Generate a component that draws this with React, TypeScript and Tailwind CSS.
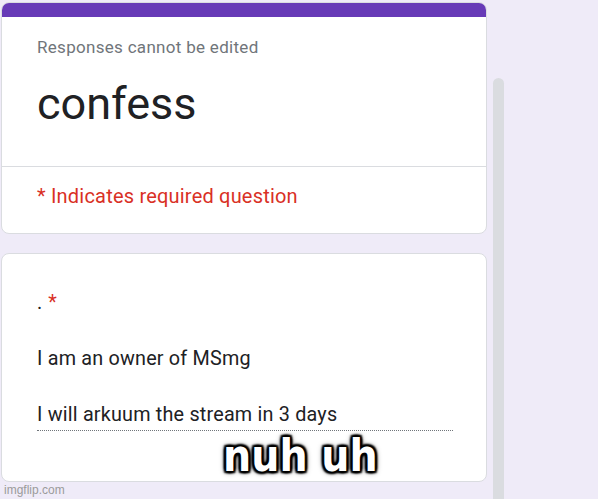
import React from 'react';

const ROBOTO = "font-['Roboto','Liberation_Sans',sans-serif]";

function HeaderCard() {
  return (
    <div className="rounded-[8px] border border-[#dadce0] bg-white overflow-hidden">
      <div className="h-[14px] bg-[#673ab7]" />
      <div className="h-[149px] px-[35px] pt-[19px]">
        <div className="text-[17px] leading-[22px] tracking-[0.3px] text-[#70757a]">
          Responses cannot be edited
        </div>
        <div className="mt-[20px] text-[45px] leading-[52px] text-[#202124]">confess</div>
      </div>
      <div className="h-[67px] border-t border-[#dadce0] px-[35px] pt-[17px]">
        <div className="text-[20px] leading-[24px] tracking-[0.2px] text-[#d93025]">
          * Indicates required question
        </div>
      </div>
    </div>
  );
}

function QuestionCard() {
  return (
    <div className="h-[229px] rounded-[8px] border border-[#dadce0] bg-white px-[35px] pt-[37px]">
      <div className="text-[19.8px] leading-[24px] text-[#202124]">
        .<span className="pl-[6px] text-[#d93025]">*</span>
      </div>
      <div className="mt-[32px] text-[19.8px] leading-[24px] tracking-[0.2px] text-[#202124]">
        I am an owner of MSmg
      </div>
      <div className="mt-[32px] w-[416px] border-b border-dotted border-[#70757a] pb-[3px] text-[19.8px] leading-[24px] tracking-[0.2px] text-[#202124]">
        I will arkuum the stream in 3 days
      </div>
    </div>
  );
}

export default function App() {
  return (
    <div className={`relative h-[499px] w-[598px] overflow-hidden bg-[#efebf8] ${ROBOTO}`}>
      <div className="flex h-full">
        <div className="flex w-[487px] flex-col gap-[19px] pl-[1px] pt-[2px]">
          <HeaderCard />
          <QuestionCard />
        </div>
        <div className="ml-[6px] mt-[78px] h-[460px] w-[11px] rounded-t-full bg-[#dadce0]" />
      </div>

      <div className="absolute left-[223px] top-[428px] font-['DejaVu_Sans_Condensed','DejaVu_Sans',sans-serif] text-[44px] font-bold leading-[56px] text-white [font-stretch:condensed] [text-shadow:2px_0_2px_#000,-2px_0_2px_#000,0_2px_2px_#000,0_-2px_2px_#000,2px_2px_2px_#000,-2px_-2px_2px_#000,2px_-2px_2px_#000,-2px_2px_2px_#000,0_0_6px_#000]">
        nuh uh
      </div>

      <div className="absolute left-[4px] top-[483px] font-['Liberation_Sans',sans-serif] text-[12px] leading-[14px] text-[#9b9b9b]">
        imgflip.com
      </div>
    </div>
  );
}
